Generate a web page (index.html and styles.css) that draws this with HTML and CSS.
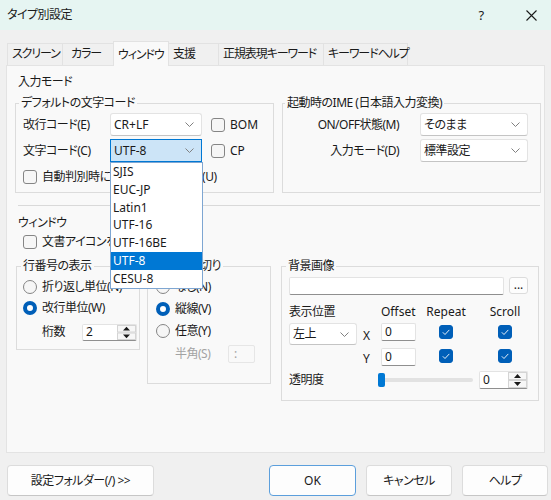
FILE: index.html
```html
<!DOCTYPE html>
<html lang="ja">
<head>
    <meta charset="UTF-8">
    <title>タイプ別設定</title>
    <link rel="stylesheet" href="styles.css">
</head>
<body>
    <div class="titlebar">
        <span class="title">タイプ別設定</span>
        <span class="tb-help">?</span>
        <svg class="tb-close" width="11" height="11" viewBox="0 0 11 11"><path d="M.5.5l10 10M10.5.5l-10 10" stroke="#1a1a1a" stroke-width="1.1"/></svg>
    </div>

    <div class="tabs">
        <div class="tab t-screen">スクリーン</div>
        <div class="tab t-color">カラー</div>
        <div class="tab t-window active">ウィンドウ</div>
        <div class="tab t-support">支援</div>
        <div class="tab t-regex">正規表現キーワード</div>
        <div class="tab t-kwhelp">キーワードヘルプ</div>
    </div>

    <div class="panel">
        <div class="section">入力モード</div>
        <div class="groups top-groups">
            <fieldset class="group g-code">
                <legend>デフォルトの文字コード</legend>
                <div class="gbody">
                    <div class="frow">
                        <span class="lbl code-lbl">改行コード(E)</span>
                        <div class="combo code-combo">CR+LF<svg class="chev" width="9" height="5" viewBox="0 0 9 5"><path d="M.5.5l4 4 4-4" fill="none" stroke="#808080"/></svg></div>
                        <span class="check side-check"><span class="box"></span>BOM</span>
                    </div>
                    <div class="frow">
                        <span class="lbl code-lbl">文字コード(C)</span>
                        <div class="combo code-combo focused">UTF-8<svg class="chev" width="9" height="5" viewBox="0 0 9 5"><path d="M.5.5l4 4 4-4" fill="none" stroke="#808080"/></svg>
                            <ul class="droplist">
                                <li>SJIS</li>
                                <li>EUC-JP</li>
                                <li>Latin1</li>
                                <li>UTF-16</li>
                                <li>UTF-16BE</li>
                                <li class="sel">UTF-8</li>
                                <li>CESU-8</li>
                            </ul>
                        </div>
                        <span class="check side-check"><span class="box"></span>CP</span>
                    </div>
                    <div class="frow">
                        <span class="check"><span class="box"></span>自動判別時にCESU-8を判別する(U)</span>
                    </div>
                </div>
            </fieldset>

            <fieldset class="group g-ime">
                <legend>起動時のIME (日本語入力変換)</legend>
                <div class="gbody">
                    <div class="frow">
                        <span class="lbl ime-lbl">ON/OFF状態(M)</span>
                        <div class="combo ime-combo">そのまま<svg class="chev" width="9" height="5" viewBox="0 0 9 5"><path d="M.5.5l4 4 4-4" fill="none" stroke="#808080"/></svg></div>
                    </div>
                    <div class="frow">
                        <span class="lbl ime-lbl">入力モード(D)</span>
                        <div class="combo ime-combo">標準設定<svg class="chev" width="9" height="5" viewBox="0 0 9 5"><path d="M.5.5l4 4 4-4" fill="none" stroke="#808080"/></svg></div>
                    </div>
                </div>
            </fieldset>
        </div>

        <div class="sep"></div>

        <div class="section section-win">ウィンドウ</div>
        <div class="icon-row"><span class="check"><span class="box"></span>文書アイコンを使う(I)</span></div>

        <div class="groups bottom-groups">
            <fieldset class="group g-linenum">
                <legend>行番号の表示</legend>
                <div class="gbody">
                    <div class="rrow"><span class="radio"></span>折り返し単位(N)</div>
                    <div class="rrow"><span class="radio on"></span>改行単位(W)</div>
                    <div class="digits-row">
                        <span class="digits-lbl">桁数</span>
                        <div class="edit num">2<svg class="spin" width="19" height="15" viewBox="0 0 19 15"><rect x=".5" y=".5" width="18" height="6.5" fill="#f7f7f7" stroke="#d4d4d4"/><rect x=".5" y="8" width="18" height="6.5" fill="#f7f7f7" stroke="#d4d4d4"/><path d="M6 5.5h7L9.5 1.8z M6 9.5h7l-3.5 3.7z" fill="#1a1a1a"/></svg></div>
                    </div>
                </div>
            </fieldset>

            <fieldset class="group g-sep">
                <legend>行番号区切り</legend>
                <div class="gbody">
                    <div class="rrow"><span class="radio"></span>なし(N)</div>
                    <div class="rrow"><span class="radio on"></span>縦線(V)</div>
                    <div class="rrow"><span class="radio"></span>任意(Y)</div>
                    <div class="half-row">
                        <span class="half-lbl">半角(S)</span>
                        <div class="edit disabled">:</div>
                    </div>
                </div>
            </fieldset>

            <fieldset class="group g-bg">
                <legend>背景画像</legend>
                <div class="gbody">
                    <div class="file-row">
                        <div class="edit file"></div>
                        <div class="btn-dots">...</div>
                    </div>
                    <div class="bg-grid">
                        <span>表示位置</span>
                        <span></span>
                        <span class="hdr-left">Offset</span>
                        <span class="hdr">Repeat</span>
                        <span class="hdr">Scroll</span>

                        <div class="combo pos-combo">左上<svg class="chev" width="9" height="5" viewBox="0 0 9 5"><path d="M.5.5l4 4 4-4" fill="none" stroke="#808080"/></svg></div>
                        <span class="axis axis-x">X</span>
                        <div class="edit off">0</div>
                        <span class="cell"><span class="box checked"><svg width="14" height="14" viewBox="0 0 14 14"><path d="M3.8 7.3l2.2 2.2 4.3-4.6" fill="none" stroke="#fff" stroke-width=".9"/></svg></span></span>
                        <span class="cell"><span class="box checked"><svg width="14" height="14" viewBox="0 0 14 14"><path d="M3.8 7.3l2.2 2.2 4.3-4.6" fill="none" stroke="#fff" stroke-width=".9"/></svg></span></span>

                        <span></span>
                        <span class="axis axis-y">Y</span>
                        <div class="edit off">0</div>
                        <span class="cell"><span class="box checked"><svg width="14" height="14" viewBox="0 0 14 14"><path d="M3.8 7.3l2.2 2.2 4.3-4.6" fill="none" stroke="#fff" stroke-width=".9"/></svg></span></span>
                        <span class="cell"><span class="box checked"><svg width="14" height="14" viewBox="0 0 14 14"><path d="M3.8 7.3l2.2 2.2 4.3-4.6" fill="none" stroke="#fff" stroke-width=".9"/></svg></span></span>
                    </div>
                    <div class="alpha-row">
                        <span class="alpha-lbl">透明度</span>
                        <div class="slider"><span class="thumb"></span></div>
                        <div class="edit alpha">0<svg class="spin" width="19" height="16" viewBox="0 0 19 16"><rect x=".5" y=".5" width="18" height="7" fill="#f7f7f7" stroke="#d4d4d4"/><rect x=".5" y="8.5" width="18" height="7" fill="#f7f7f7" stroke="#d4d4d4"/><path d="M6 6h7L9.5 2z M6 10h7l-3.5 4z" fill="#1a1a1a"/></svg></div>
                    </div>
                </div>
            </fieldset>
        </div>
    </div>

    <div class="footer">
        <div class="btn btn-folder">設定フォルダー(/) &gt;&gt;</div>
        <div class="btn btn-ok">OK</div>
        <div class="btn">キャンセル</div>
        <div class="btn">ヘルプ</div>
    </div>
</body>
</html>
```

FILE: styles.css
```css
* { box-sizing: border-box; }
body { margin: 0; width: 551px; height: 500px; overflow: hidden; background: #f0f0f0; color: #1a1a1a; font: 12px/16px "Noto Sans", "Noto Sans CJK JP", sans-serif; font-feature-settings: "palt"; letter-spacing: -0.5px; }

/* title bar */
.titlebar { height: 30px; display: flex; align-items: center; padding-left: 7px; background: #e6f5f2; }
.title { flex: 1; }
.tb-help { width: 20px; text-align: center; font-size: 13px; margin-right: 35px; }
.tb-close { margin-right: 14px; }

/* tabs */
.tabs { height: 35px; display: flex; align-items: flex-end; padding-left: 7px; }
.tab { height: 22px; padding: 2px 0 0 4px; border: 1px solid #e2e2e2; border-bottom: none; margin-right: -1px; background: #f0f0f0; white-space: nowrap; letter-spacing: -1.1px; }
.tab.active { height: 25px; padding-top: 5px; margin-bottom: -1px; background: #f9f9f9; position: relative; z-index: 1; }
.t-screen { width: 56px; }
.t-color { width: 52px; padding-left: 8px; }
.t-window { width: 56px; }
.t-support { width: 51px; }
.t-regex { width: 106px; }
.t-kwhelp { width: 85px; }

.panel { height: 388px; margin: 0 6px; padding-top: 8px; background: #f9f9f9; border: 1px solid #e3e3e3; }
.section { margin-left: 11px; }

/* group boxes */
.groups { display: flex; align-items: flex-start; }
.group { margin: 0; padding: 0; min-width: 0; border: 1px solid #dcdcdc; }
.group legend { padding: 0 2px; margin-left: 3px; line-height: 16px; }
.top-groups { gap: 8px; margin: 5px 0 0 8px; }
.g-code, .g-ime { width: 259px; height: 98px; }
.g-ime legend { margin-left: 2px; }
.gbody { padding: 2px 0 0 7px; }

.frow { height: 23px; margin-bottom: 3px; display: flex; align-items: center; white-space: nowrap; }
.lbl { flex: none; }
.code-lbl { width: 87px; }
.ime-lbl { width: 109px; text-align: right; }

.combo { position: relative; height: 23px; display: flex; align-items: center; padding-left: 3px; letter-spacing: 0; background: #fff; border: 1px solid #e3e3e3; border-bottom-color: #c4c4c4; border-radius: 3px; }
.combo .chev { margin-left: auto; margin-right: 7px; }
.code-combo { width: 92px; }
.ime-combo { width: 108px; margin-left: 21px; letter-spacing: -0.5px; }
.combo.focused { background: #cce4f7; border-color: #0078d4; border-radius: 0; }

.droplist { position: absolute; top: 22px; left: -1px; width: 93px; margin: 0; padding: 0; list-style: none; background: #fff; border: 1px solid #7ea6d2; z-index: 10; }
.droplist li { height: 17.8px; line-height: 17.8px; padding-left: 2px; }
.droplist li.sel { background: #0078d4; color: #fff; }

.check { display: flex; align-items: center; white-space: nowrap; }
.box { flex: none; width: 14px; height: 14px; margin-right: 5px; border: 1px solid #858585; border-radius: 3px; background: #f6f6f6; }
.box.checked { margin: 0; border-color: #005fb8; background: #005fb8; }
.box.checked svg { display: block; margin: -1px; }
.side-check { margin-left: 9px; letter-spacing: 0; }

.sep { margin: 12px 4px 0 11px; border-top: 1px solid #d9d9d9; }
.section-win { margin-top: 9px; }
.icon-row { height: 16px; margin: 3px 0 0 16px; display: flex; align-items: center; }

.bottom-groups { margin: 8px 0 0 9px; }
.g-linenum { width: 124px; height: 92px; margin-right: 7px; }
.g-linenum legend { margin-left: 4px; }
.g-sep { width: 124px; height: 126px; margin-right: 10px; }
.g-sep legend { margin-left: 4px; }
.g-bg { width: 258px; height: 143px; }
.g-bg legend { margin-left: 4px; }

.radio { flex: none; width: 14px; height: 14px; margin-right: 5px; border: 1px solid #858585; border-radius: 50%; background: #f6f6f6; }
.radio.on { border: 4px solid #005fb8; background: #fff; }
.rrow { height: 21px; display: flex; align-items: center; white-space: nowrap; }
.g-linenum .gbody { padding: 2px 0 0 6px; }
.g-sep .gbody { padding: 2px 0 0 8px; }
.g-sep .rrow { height: 22px; }

.edit { height: 18px; display: flex; align-items: center; padding-left: 3px; letter-spacing: 0; background: #fff; border: 1px solid #e3e3e3; border-bottom-color: #8f8f8f; border-radius: 2px; }
.edit .spin { margin-left: auto; }

.digits-row { height: 20px; margin-top: 4px; display: flex; align-items: center; }
.digits-lbl { width: 40px; margin-left: 19px; }
.num { width: 55px; height: 17px; padding-right: 0; }

.half-row { height: 18px; margin-top: 3px; display: flex; align-items: center; }
.half-lbl { width: 53px; margin-left: 19px; color: #a3a3a3; }
.edit.disabled { width: 27px; padding-left: 5px; color: #a3a3a3; background: #f9f9f9; border-color: #e6e6e6; }

.g-bg .gbody { padding: 3px 0 0 7px; }
.file-row { display: flex; align-items: flex-start; }
.file { width: 215px; }
.btn-dots { width: 19px; height: 17px; margin-left: 5px; text-align: center; line-height: 13px; letter-spacing: 0; background: #fdfdfd; border: 1px solid #dcdcdc; border-radius: 3px; }

.bg-grid { margin-top: 9px; display: grid; grid-template-columns: 68px 24px 35px 60px 58px; grid-template-rows: 16px 22px 18px; row-gap: 3px; white-space: nowrap; }
.hdr, .hdr-left, .axis { letter-spacing: 0; }
.hdr { text-align: center; }
.pos-combo { width: 68px; height: 22px; letter-spacing: -0.5px; }
.axis { padding-left: 6px; }
.axis-x { margin-top: 5px; }
.axis-y { margin-top: 3px; }
.off { width: 35px; }
.cell { display: flex; justify-content: center; }
.bg-grid .cell:nth-child(9), .bg-grid .cell:nth-child(10) { padding-top: 2px; }
.bg-grid .cell:nth-child(14), .bg-grid .cell:nth-child(15) { padding-top: 1px; }

.alpha-row { height: 18px; margin-top: 5px; display: flex; align-items: center; }
.alpha-lbl { width: 89px; }
.slider { width: 95px; height: 4px; display: flex; align-items: center; background: #e2e2e2; border-radius: 2px; }
.thumb { width: 7px; height: 14px; background: #0078d4; border-radius: 2px; }
.alpha { width: 49px; margin-left: 6px; padding-right: 0; }

/* buttons */
.footer { display: flex; margin-top: 12px; padding: 0 3px 0 7px; }
.btn { width: 86px; height: 31px; margin-left: 10px; display: flex; align-items: center; justify-content: center; background: #fdfdfd; border: 1px solid #dcdcdc; border-bottom-color: #c6c6c6; border-radius: 4px; }
.btn-folder { width: 147px; margin-left: 0; }
.btn-ok { width: 87px; margin-left: auto; border-color: #5c9fdc; letter-spacing: 0; }
```
